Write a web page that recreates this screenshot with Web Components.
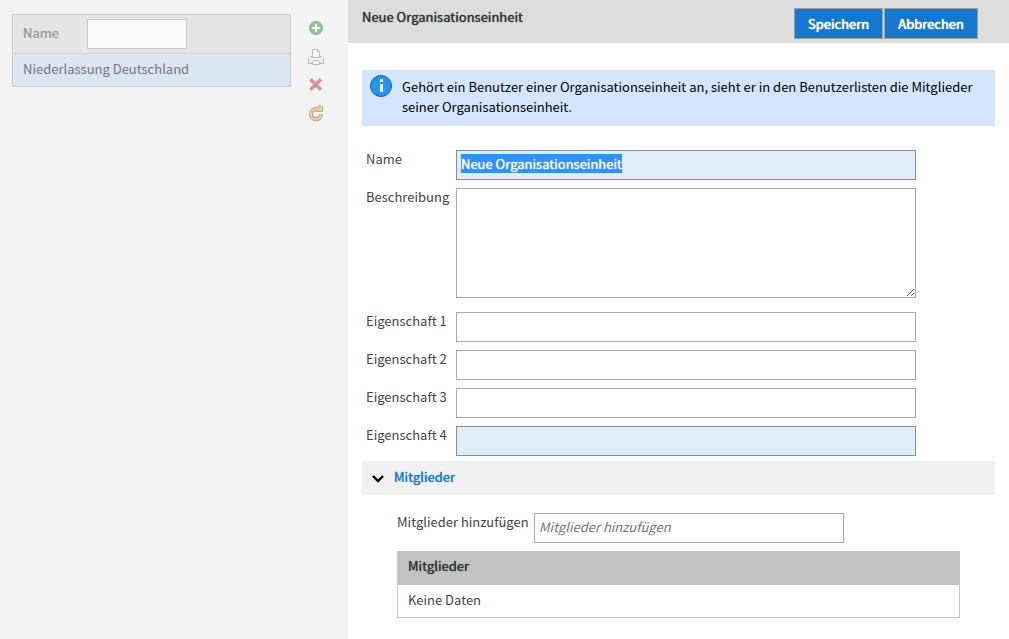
<!DOCTYPE html>
<html lang="de">
<head>
<meta charset="utf-8">
<meta name="viewport" content="width=device-width, initial-scale=1">
<title>Organisationseinheiten</title>
<style>
  html, body { margin: 0; height: 100%; }
  body { background: #fff; color: #444; font: 13px/18px "Noto Sans CJK SC", "Noto Sans CJK JP", sans-serif; --strong: 0 0 1px currentColor; }
</style>
</head>
<body>
<org-app>
  <org-list slot="side"></org-list>
  <org-toolbar slot="side"></org-toolbar>
  <org-header slot="header">
    Neue Organisationseinheit
    <org-button slot="actions">Speichern</org-button>
    <org-button slot="actions">Abbrechen</org-button>
  </org-header>
  <org-info>Gehört ein Benutzer einer Organisationseinheit an, sieht er in den Benutzerlisten die Mitglieder seiner Organisationseinheit.</org-info>
  <org-form>
    <org-field label="Name" value="Neue Organisationseinheit" tinted selected></org-field>
    <org-field label="Beschreibung" multiline></org-field>
    <org-field label="Eigenschaft 1"></org-field>
    <org-field label="Eigenschaft 2"></org-field>
    <org-field label="Eigenschaft 3"></org-field>
    <org-field label="Eigenschaft 4" tinted></org-field>
  </org-form>
  <org-section heading="Mitglieder">
    <org-field label="Mitglieder hinzufügen" placeholder="Mitglieder hinzufügen" compact></org-field>
    <org-members></org-members>
  </org-section>
</org-app>

<script>
const define = (name, html, setup) => {
  const template = document.createElement('template');
  template.innerHTML = '<style>*{box-sizing:border-box}:host{box-sizing:border-box}</style>' + html;
  customElements.define(name, class extends HTMLElement {
    connectedCallback() {
      if (this.shadowRoot) return;
      const root = this.attachShadow({ mode: 'open' });
      root.append(template.content.cloneNode(true));
      if (setup) setup(this, root);
    }
  });
};

define('org-app', `
  <style>
    :host { display: grid; grid-template-columns: 348px minmax(0, 1fr); min-height: 100%; }
    aside { display: flex; align-items: flex-start; gap: 16px; padding: 14px 23px 14px 12px; background: #f3f3f3; }
    .body { padding: 27px 14px 21px; }
  </style>
  <aside><slot name="side"></slot></aside>
  <main><slot name="header"></slot><div class="body"><slot></slot></div></main>
`);

define('org-list', `
  <style>
    :host { display: block; flex: 1; }
    table { width: 100%; border-collapse: collapse; border: 1px solid #ccc; }
    th { height: 39px; padding: 0 10px; background: #e6e6e6; border-bottom: 1px solid #d3d3d3; color: #a0a0a0; text-align: left; font-weight: 400; text-shadow: var(--strong); }
    label { display: flex; align-items: center; }
    span { width: 64px; padding-bottom: 2px; }
    input { width: 100px; height: 30px; padding: 0 5px 2px; border: 1px solid #ccc; background: #f9f9f9; font: inherit; color: #777; }
    td { height: 33px; padding: 0 10px 2px; background: #dae6f2; color: #777; }
  </style>
  <table>
    <thead><tr><th scope="col"><label><span>Name</span><input type="text"></label></th></tr></thead>
    <tbody><tr><td>Niederlassung Deutschland</td></tr></tbody>
  </table>
`);

define('org-toolbar', `
  <style>
    :host { display: flex; flex-direction: column; }
    button { display: flex; align-items: center; justify-content: center; width: 18px; height: 28px; padding: 0; border: 0; background: none; }
    svg { width: 16px; height: 16px; display: block; overflow: visible; }
  </style>
  <button type="button" aria-label="Hinzufügen"><svg viewBox="0 0 16 16"><circle cx="8" cy="8" r="6.5" fill="#93c795" stroke="#79b67d"/><path d="M8 4v8M4 8h8" stroke="#fff" stroke-width="2.2"/></svg></button>
  <button type="button" aria-label="Drucken"><svg viewBox="0 -1 16 16" fill="#f7f7f7" stroke="#b9b9b9"><path d="M2.5 7.500h11l2 2v5H.5v-5z" fill="#ececec"/><path d="M4.500 8.500V.5h5l2 2v6z"/><path d="M9.500.5v2h2" fill="none"/><path d="M1 10h14" stroke="#fff"/><path d="M4.500 15.500v-3l1-1h5l1 1v3z"/></svg></button>
  <button type="button" aria-label="Löschen"><svg viewBox="0 0 16 16"><path d="M2.500 3.300l10.400 10.400M12.900 3.300l-10.400 10.400" stroke="#da919b" stroke-width="3.600"/></svg></button>
  <button type="button" aria-label="Aktualisieren"><svg viewBox="0 -1 16 16" fill="none"><path d="M9 4.300A5 5 0 1 0 13 9.300" stroke="#c4a58c" stroke-width="4.200"/><path d="M8 6.500h6.500V1.500h-2L11.500 0 10 1.500l1 2.500z" fill="#ecd2a5" stroke="#c4a58c"/><path d="M11 4.300H8A5 5 0 1 0 13 9.500" stroke="#ecd2a5" stroke-width="2"/></svg></button>
`);

define('org-header', `
  <style>
    :host { display: flex; justify-content: space-between; align-items: flex-start; height: 43px; padding: 8px 31px 0 14px; background: #ddd; }
    h1 { margin: 0; color: #333; font: inherit; text-shadow: var(--strong); }
    div { display: flex; gap: 1px; }
  </style>
  <h1><slot></slot></h1><div><slot name="actions"></slot></div>
`);

define('org-button', `
  <style>
    :host { display: block; }
    button { height: 31px; padding: 0 13px; border: 1px solid #a0a0a0; background: #1478d0; color: #fff; font: inherit; text-shadow: var(--strong), var(--strong); }
  </style>
  <button type="button"><slot></slot></button>
`);

define('org-info', `
  <style>
    :host { display: flex; align-items: flex-start; gap: 9px; min-height: 56px; padding: 4px 8px; background: #d3e5ff; color: #000; line-height: 20px; }
    svg { flex: none; width: 23px; height: 24px; }
    p { margin: 3px 0 0; }
  </style>
  <svg viewBox="0 0 23 24" aria-hidden="true"><circle cx="11" cy="12" r="10.500" fill="#2196f3" stroke="#14609c"/><path d="M10 5h3v3h-3zM10 10h3v8h-3z" fill="#fff"/></svg>
  <p><slot></slot></p>
`);

define('org-form', `
  <style>:host { display: flex; flex-direction: column; gap: 8px; padding: 24px 4px 5px; }</style>
  <slot></slot>
`);

define('org-field', `
  <style>
    :host { display: flex; align-items: flex-start; }
    label { flex: none; width: 90px; white-space: nowrap; }
    input, textarea { display: block; flex: 1; min-width: 0; max-width: 460px; height: 30px; margin: 0; padding: 0 4px 4px; border: 1px solid #a9a9a9; border-radius: 0; outline: 0; background: #fff; color: #333; font: inherit; }
    textarea { height: 110px; resize: both; }
    :host([multiline]) { padding-bottom: 6px; }
    :host([compact]) label { width: 137px; }
    :host([compact]) input { max-width: 310px; }
    :host([tinted]) input { background: #e0edf7; border-color: #7094ab; text-shadow: var(--strong); }
    ::placeholder { color: #757575; font-style: italic; opacity: 1; }
    ::selection { background: #3390ff; color: #fff; text-shadow: 0 0 1px #fff; }
  </style>
  <label for="control"></label>
`, (host, root) => {
  root.querySelector('label').textContent = host.getAttribute('label');
  const control = document.createElement(host.hasAttribute('multiline') ? 'textarea' : 'input');
  control.id = 'control';
  control.value = host.getAttribute('value') || '';
  control.placeholder = host.getAttribute('placeholder') || '';
  root.append(control);
  if (host.hasAttribute('selected')) { control.focus(); control.select(); }
});

define('org-section', `
  <style>
    :host { display: block; }
    h2 { margin: 0; background: #f1f1f1; font: inherit; }
    button { display: flex; align-items: center; gap: 10px; width: 100%; height: 34px; padding: 0 10px; border: 0; background: none; color: #1976d2; font: inherit; text-shadow: var(--strong); text-align: left; }
    span { padding-bottom: 2px; }
    svg { width: 12px; height: 12px; }
    .content { display: flex; flex-direction: column; gap: 8px; padding: 18px 35px 0; }
  </style>
  <h2><button type="button" aria-expanded="true"><svg viewBox="0 0 12 12" aria-hidden="true"><path d="M1 4l5 5 5-5" fill="none" stroke="#000" stroke-width="2.400"/></svg><span></span></button></h2>
  <div class="content"><slot></slot></div>
`, (host, root) => { root.querySelector('span').textContent = host.getAttribute('heading'); });

define('org-members', `
  <style>
    :host { display: block; }
    table { width: 100%; border-collapse: collapse; border: 1px solid #c3c3c3; }
    th { height: 33px; padding: 0 10px 4px; background: #c3c3c3; color: #333; font-weight: 400; text-shadow: var(--strong); text-align: left; }
    td { height: 33px; padding: 0 10px 2px; }
  </style>
  <table><thead><tr><th scope="col">Mitglieder</th></tr></thead><tbody><tr><td>Keine Daten</td></tr></tbody></table>
`);
</script>
</body>
</html>
